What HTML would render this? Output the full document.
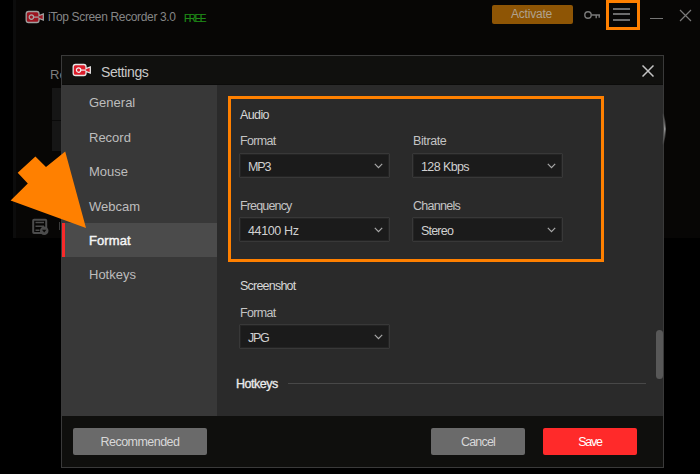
<!DOCTYPE html>
<html><head><meta charset="utf-8">
<style>
*{margin:0;padding:0;box-sizing:border-box}
html,body{width:700px;height:474px;overflow:hidden;background:#000;font-family:"Liberation Sans",sans-serif}
.a{position:absolute}
.t{position:absolute;white-space:nowrap;line-height:1}
#main{left:13px;top:0;width:687px;height:238px;background:#070605;border-left:3px solid #0c0c0c}
#dlg{left:61px;top:55px;width:603px;height:413px;background:#383838;border:1px solid #3a3a3a}
#title{left:62px;top:56px;width:601px;height:29px;background:#10100e;border-bottom:1px solid #0b0b0a}
#side{left:62px;top:85px;width:155px;height:331px;background:#383838}
#sel{left:62px;top:223px;width:155px;height:34px;background:#4b4b4b}
#red{left:62px;top:223px;width:3px;height:34px;background:#f82a2a}
#content{left:217px;top:85px;width:446px;height:331px;background:#2a2a2a}
#footer{left:62px;top:416px;width:601px;height:51px;background:#0f0f0d}
.side{color:#bdbdbd;font-size:13px}
.lbl{color:#c4c4c4;font-size:12.5px}
.dd{position:absolute;width:151px;height:25px;background:#1b1b1b;border:1px solid #383838;box-shadow:inset 0 0 0 1px #242424;border-radius:1px}
.dd span{position:absolute;left:8px;top:7px;font-size:12.5px;color:#d0d0d0;line-height:1;white-space:nowrap}
.dd svg{position:absolute;right:6px;top:9px}
.btn{position:absolute;height:27px;border-radius:2px;color:#d8d8d8;font-size:12.5px;text-align:center;line-height:28.5px}
</style></head>
<body>
<div id="main" class="a"></div>
<!-- main window title -->
<svg class="a" style="left:24.6px;top:10px" width="20" height="14" viewBox="0 0 20 14">
  <path d="M3.5 1.5 H11.8 Q14 1.5 14 3.8 V5.6 L18.3 3.9 V10 L14 8.4 V10.3 Q14 12.5 11.8 12.5 H3.5 Q1.2 12.5 1.2 10.3 V3.8 Q1.2 1.5 3.5 1.5Z" fill="#9c1420" stroke="#a0a0a0" stroke-width="1.3"/>
  <circle cx="6.4" cy="7.1" r="2.2" fill="#9c1420" stroke="#a8a8a8" stroke-width="1.2"/>
  <path d="M8.5 7.1 L14.2 7.1" stroke="#a8a8a8" stroke-width="1.2"/>
</svg>
<div class="t" style="left:48px;top:11px;font-size:12px;color:#858585;letter-spacing:-0.35px">iTop Screen Recorder 3.0</div>
<div class="t" style="left:184px;top:14px;font-size:10px;color:#1f8c17;letter-spacing:-1.4px;-webkit-text-stroke:0.2px #1f8c17">FREE</div>
<div class="a" style="left:492px;top:5px;width:81px;height:19px;background:#8e5505;border-radius:2px"></div>
<div class="t" style="left:511px;top:8px;font-size:12px;color:#b0a28e;letter-spacing:-0.2px">Activate</div>
<!-- key icon -->
<svg class="a" style="left:583px;top:9px" width="19" height="12" viewBox="0 0 19 12">
  <circle cx="5" cy="6" r="3.2" fill="none" stroke="#7a7a7a" stroke-width="1.4"/>
  <path d="M8.2 6 H17 M13.2 6 V9.3 M16.2 6 V8.8" stroke="#7a7a7a" stroke-width="1.4" fill="none"/>
</svg>
<!-- menu box -->
<div class="a" style="left:606px;top:0px;width:34px;height:30px;border:3px solid #ff8000"></div>
<div class="a" style="left:613px;top:8px;width:17px;height:2px;background:#6c6c6c"></div>
<div class="a" style="left:613px;top:13px;width:17px;height:2px;background:#6c6c6c"></div>
<div class="a" style="left:613px;top:19px;width:17px;height:2px;background:#6c6c6c"></div>
<div class="a" style="left:650px;top:18px;width:13px;height:1.2px;background:#767676"></div>
<svg class="a" style="left:679px;top:9px" width="13" height="13" viewBox="0 0 13 13">
  <path d="M1 1 L12 12 M12 1 L1 12" stroke="#7a7a7a" stroke-width="1.2"/>
</svg>
<!-- underlying main window bits -->
<div class="t" style="left:50px;top:68px;font-size:13px;color:#7e7e7e">Re</div>
<div class="a" style="left:52px;top:88px;width:10px;height:63px;background:#161616"></div>
<div class="a" style="left:52px;top:120px;width:10px;height:1px;background:#0a0a0a"></div>
<svg class="a" style="left:31px;top:217px" width="19" height="19" viewBox="0 0 19 19">
  <rect x="2.2" y="2.8" width="13" height="13.2" rx="0.8" fill="none" stroke="#4c4c4c" stroke-width="2"/>
  <path d="M4.5 5.5 H13 M4.5 9.2 H13 M4.5 13.2 H8.5" stroke="#4c4c4c" stroke-width="1.6"/>
  <circle cx="13.2" cy="13.8" r="4.3" fill="#4c4c4c"/>
  <path d="M11 12.8 L13.2 15.4 L15.4 12.8Z" fill="#0a0907"/>
</svg>

<div class="a" style="left:58.5px;top:222px;width:1.3px;height:8px;background:#3c3c3c"></div>
<!-- dialog -->
<div id="dlg" class="a"></div>
<div id="title" class="a"></div>
<div id="side" class="a"></div>
<div id="sel" class="a"></div>
<div id="red" class="a"></div>
<div id="content" class="a"></div>
<div id="footer" class="a"></div>

<svg class="a" style="left:72.4px;top:63.3px" width="20" height="14" viewBox="0 0 20 14">
  <path d="M3.5 1.5 H11.8 Q14 1.5 14 3.8 V5.6 L18.3 3.9 V10 L14 8.4 V10.3 Q14 12.5 11.8 12.5 H3.5 Q1.2 12.5 1.2 10.3 V3.8 Q1.2 1.5 3.5 1.5Z" fill="#dc1c2a" stroke="#e6e6e6" stroke-width="1.3"/>
  <circle cx="6.6" cy="7.1" r="2.2" fill="#dc1c2a" stroke="#f0f0f0" stroke-width="1.2"/>
  <path d="M8.7 7.1 L14.2 7.1" stroke="#f0f0f0" stroke-width="1.2"/>
</svg>
<div class="t" style="left:101px;top:65px;font-size:14px;color:#c8c8c8;letter-spacing:-0.4px">Settings</div>
<svg class="a" style="left:642px;top:65px" width="12" height="12" viewBox="0 0 12 12">
  <path d="M0.5 0.5 L11.5 11.5 M11.5 0.5 L0.5 11.5" stroke="#c4c4c4" stroke-width="1.5"/>
</svg>

<div class="t side" style="left:89px;top:96px">General</div>
<div class="t side" style="left:89px;top:131px">Record</div>
<div class="t side" style="left:89px;top:165px">Mouse</div>
<div class="t side" style="left:89px;top:200px">Webcam</div>
<div class="t side" style="left:89px;top:234px;color:#f4f4f4;-webkit-text-stroke:0.45px #f4f4f4;letter-spacing:0.1px">Format</div>
<div class="t side" style="left:89px;top:268px">Hotkeys</div>

<!-- audio box -->
<div class="a" style="left:228px;top:96px;width:376px;height:166px;border:3px solid #ff8000"></div>
<div class="t lbl" style="left:240px;top:109px;color:#d8d8d8;letter-spacing:-0.6px">Audio</div>
<div class="t lbl" style="left:240px;top:135px;letter-spacing:-0.68px">Format</div>
<div class="t lbl" style="left:413px;top:135px;letter-spacing:-0.4px">Bitrate</div>
<div class="dd" style="left:239px;top:153px"><span style="letter-spacing:-1.1px">MP3</span><svg width="9" height="6" viewBox="0 0 9 6"><path d="M0.8 0.8 L4.5 4.6 L8.2 0.8" fill="none" stroke="#a8a8a8" stroke-width="1.2"/></svg></div>
<div class="dd" style="left:412px;top:153px"><span style="letter-spacing:-0.6px">128 Kbps</span><svg width="9" height="6" viewBox="0 0 9 6"><path d="M0.8 0.8 L4.5 4.6 L8.2 0.8" fill="none" stroke="#a8a8a8" stroke-width="1.2"/></svg></div>
<div class="t lbl" style="left:240px;top:200px;letter-spacing:-0.84px">Frequency</div>
<div class="t lbl" style="left:413px;top:200px;letter-spacing:-0.71px">Channels</div>
<div class="dd" style="left:239px;top:217px"><span style="letter-spacing:-0.37px;left:8px">44100 Hz</span><svg width="9" height="6" viewBox="0 0 9 6"><path d="M0.8 0.8 L4.5 4.6 L8.2 0.8" fill="none" stroke="#a8a8a8" stroke-width="1.2"/></svg></div>
<div class="dd" style="left:412px;top:217px"><span style="letter-spacing:-0.8px">Stereo</span><svg width="9" height="6" viewBox="0 0 9 6"><path d="M0.8 0.8 L4.5 4.6 L8.2 0.8" fill="none" stroke="#a8a8a8" stroke-width="1.2"/></svg></div>

<div class="t lbl" style="left:240px;top:280px;color:#d8d8d8;letter-spacing:-0.78px">Screenshot</div>
<div class="t lbl" style="left:240px;top:307px;letter-spacing:-0.68px">Format</div>
<div class="dd" style="left:239px;top:324px"><span style="letter-spacing:-1.3px;left:8px">JPG</span><svg width="9" height="6" viewBox="0 0 9 6"><path d="M0.8 0.8 L4.5 4.6 L8.2 0.8" fill="none" stroke="#a8a8a8" stroke-width="1.2"/></svg></div>

<div class="t" style="left:236px;top:378px;font-size:12.5px;color:#ececec;-webkit-text-stroke:0.3px #ececec;letter-spacing:-0.5px">Hotkeys</div>
<div class="a" style="left:288px;top:383px;width:358px;height:1px;background:#484848"></div>
<div class="a" style="left:656px;top:330px;width:7px;height:49px;background:#585858;border-radius:3.5px"></div>

<div class="btn" style="left:73px;top:428px;width:134px;background:#6a6a6a;letter-spacing:-0.54px">Recommended</div>
<div class="btn" style="left:431px;top:428px;width:94px;background:#6a6a6a;letter-spacing:-0.8px">Cancel</div>
<div class="btn" style="left:543px;top:428px;width:94px;background:#ff2a2a;color:#fff;letter-spacing:-1.2px">Save</div>

<svg class="a" style="left:658px;top:110px" width="12" height="38" viewBox="0 0 12 38">
  <defs><linearGradient id="cg" x1="0" y1="0" x2="0" y2="1"><stop offset="0" stop-color="#888" stop-opacity="0"/><stop offset="0.5" stop-color="#9a9a9a"/><stop offset="1" stop-color="#888" stop-opacity="0"/></linearGradient></defs>
  <path d="M5 3 Q8.6 19 5 35" fill="none" stroke="url(#cg)" stroke-width="1.8"/>
</svg>
<!-- orange arrow -->
<svg class="a" style="left:0;top:0" width="700" height="474" viewBox="0 0 700 474">
  <polygon points="86,228 65.2,151.4 46,167 35.4,156.4 17.7,172.8 27.8,183.4 10.6,200.4" fill="#ff8000"/>
</svg>
</body></html>
